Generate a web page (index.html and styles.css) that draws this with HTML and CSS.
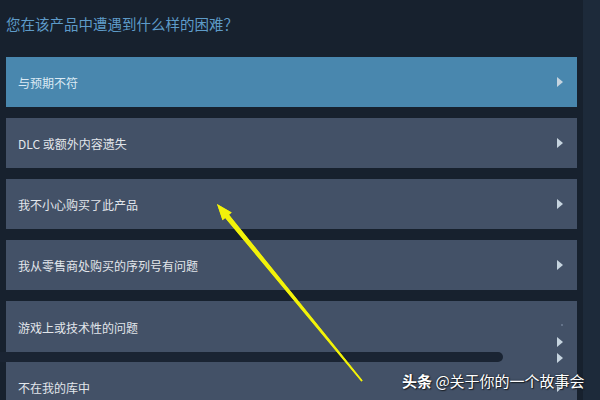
FILE: index.html
```html
<!DOCTYPE html>
<html lang="zh-CN">
<head>
<meta charset="utf-8">
<title>帮助</title>
<link rel="stylesheet" href="styles.css">
</head>
<body>
<div class="page">
  <main class="main">
    <h1 class="title">您在该产品中遭遇到什么样的困难？</h1>
    <ul class="options">
      <li class="option active"><span>与预期不符</span><i class="chev"></i></li>
      <li class="option"><span>DLC 或额外内容遗失</span><i class="chev"></i></li>
      <li class="option"><span>我不小心购买了此产品</span><i class="chev"></i></li>
      <li class="option"><span>我从零售商处购买的序列号有问题</span><i class="chev"></i></li>
      <li class="option-group">
        <div class="group-labels">
          <span class="group-label">游戏上或技术性的问题</span>
          <span class="group-label">不在我的库中</span>
        </div>
        <div class="chev-stack">
          <i class="dot"></i>
          <i class="chev"></i>
          <i class="chev"></i>
          <i class="chev low"></i>
        </div>
      </li>
    </ul>
  </main>
  <div class="track"></div>

  <!-- marker stroke over the list -->
  <div class="stroke"></div>

  <!-- pointer annotation -->
  <svg class="pointer" width="600" height="400" viewBox="0 0 600 400">
    <polygon points="217,204 231.7,212.6 229,214.8 362.6,380.5 361.4,381.5 225.2,218 222.5,220.2" fill="#f2f20a"/>
  </svg>

  <div class="watermark"><b>头条</b> @关于你的一个故事会</div>
</div>
</body>
</html>
```

FILE: styles.css
```css
html, body {
  margin: 0;
  padding: 0;
  background: #17212e;
  height: 100%;
  overflow: hidden;
}

.page {
  position: relative;
  display: flex;
  width: 600px;
  height: 400px;
  font-family: "Noto Sans CJK SC", "Noto Sans", sans-serif;
}

.main {
  width: 571px;
  margin-left: 6px;
  flex: none;
}

.title {
  margin: 13px 0 0;
  font-size: 14.5px;
  line-height: 21px;
  font-weight: normal;
  color: #5e9bc8;
}

.options {
  list-style: none;
  margin: 23px 0 0;
  padding: 0;
  display: flex;
  flex-direction: column;
  gap: 11px;
}

.option {
  height: 50px;
  display: flex;
  align-items: center;
  justify-content: space-between;
  padding: 0 14px 0 12px;
  background: #435167;
  color: #e2e6eb;
  font-size: 12px;
}

.option.active {
  background: #4987ae;
  color: #dbeaf4;
}

.chev {
  display: block;
  width: 0;
  height: 0;
  border-left: 6px solid #c6d4df;
  border-top: 5px solid transparent;
  border-bottom: 5px solid transparent;
}

.option-group {
  height: 110px;
  display: flex;
  justify-content: space-between;
  padding: 0 14px 0 12px;
  background: #435167;
  color: #e2e6eb;
  font-size: 12px;
}

.group-labels {
  display: flex;
  flex-direction: column;
  gap: 42px;
  padding-top: 18px;
}

.group-label {
  line-height: 18px;
}

.chev-stack {
  display: flex;
  flex-direction: column;
  align-items: flex-end;
  padding-top: 23px;
}

.chev-stack .dot {
  display: block;
  width: 2px;
  height: 2px;
  border-radius: 1px;
  background: #6e7e94;
  margin-bottom: 11px;
}

.chev-stack .chev {
  margin-bottom: 6px;
}

.chev-stack .chev.low {
  margin-top: 13px;
}

.track {
  flex: none;
  width: 17px;
  margin-left: 6px;
  background: #1d2a3a;
}

.stroke {
  position: absolute;
  left: 0;
  top: 352px;
  width: 503px;
  height: 10px;
  background: #1a2433;
  border-radius: 0 5px 5px 0;
}

.pointer {
  position: absolute;
  left: 0;
  top: 0;
  filter: drop-shadow(0 0 0.6px #d8d800);
}

.watermark {
  position: absolute;
  left: 402px;
  top: 371px;
  font-size: 15px;
  line-height: 20px;
  color: #ffffff;
  text-shadow: 0 0 2px #1a1f26, 1px 1px 1px #1a1f26;
  white-space: nowrap;
}

.watermark b {
  font-weight: bold;
}
```
